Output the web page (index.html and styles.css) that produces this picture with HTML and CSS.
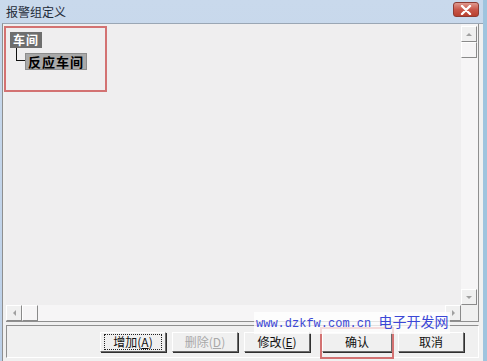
FILE: index.html
```html
<!DOCTYPE html>
<html lang="zh-CN">
<head>
    <meta charset="UTF-8">
    <title>报警组定义</title>
    <link rel="stylesheet" href="styles.css">
</head>
<body>
    <div class="window">
        <div class="titlebar">
            <span class="title">报警组定义</span>
            <span class="close-btn">
                <svg width="12" height="10" viewBox="0 0 12 10">
                    <path d="M2 1 L10 9 M10 1 L2 9" stroke="#fff" stroke-width="2.4" stroke-linecap="round"/>
                </svg>
            </span>
        </div>

        <div class="client">
            <div class="tree-box">
                <div class="tree-row">
                    <div class="tree-view">
                        <div class="node root">车间</div>
                        <div class="child">
                            <span class="branch"></span>
                            <div class="node leaf">反应车间</div>
                        </div>
                    </div>
                    <div class="vscroll">
                        <div class="sb-btn up"><span class="tri-up"></span></div>
                        <div class="sb-thumb-v"></div>
                        <div class="sb-track"></div>
                        <div class="sb-btn down"><span class="tri-down"></span></div>
                    </div>
                </div>
                <div class="hscroll">
                    <div class="sb-btn left"><span class="tri-left"></span></div>
                    <div class="sb-thumb-h"></div>
                    <div class="sb-track"></div>
                    <div class="sb-btn right"><span class="tri-right"></span></div>
                    <div class="sb-corner"></div>
                </div>
            </div>

            <div class="button-bar">
                <button class="btn focused"><span>增加(<u>A</u>)</span></button>
                <button class="btn" disabled>删除(<u>D</u>)</button>
                <button class="btn">修改(<u>E</u>)</button>
                <button class="btn ok">确认</button>
                <button class="btn">取消</button>
            </div>
        </div>

        <!-- 标注框 -->
        <div class="mark mark-tree"></div>
        <div class="mark mark-ok"></div>

        <div class="watermark">www.dzkfw.com.cn <span>电子开发网</span></div>
    </div>
</body>
</html>
```

FILE: styles.css
```css
* {
    margin: 0;
    padding: 0;
    box-sizing: border-box;
}

body {
    width: 487px;
    height: 361px;
    overflow: hidden;
    background-color: #b9d1ea;
    font-family: "Noto Sans CJK SC", "DejaVu Sans", sans-serif;
    font-size: 12px;
    color: #111;
}

.window {
    position: relative;
    width: 487px;
    height: 361px;
    display: flex;
    flex-direction: column;
    background: linear-gradient(to bottom, #c9d9ec 0%, #bcd0e8 100%);
    border-right: 4px solid #9fc4de;
}

.titlebar {
    height: 23px;
    display: flex;
    align-items: center;
    justify-content: space-between;
    padding: 0 4px 0 6px;
}

.title {
    font-size: 12px;
    color: #1e2a38;
    line-height: 1;
}

.close-btn {
    width: 26px;
    height: 15px;
    margin-top: -4px;
    border-radius: 3px;
    border: 1px solid #8d3b33;
    background: linear-gradient(to bottom, #e09a8f 0%, #c9574a 50%, #b8402f 100%);
    display: flex;
    align-items: center;
    justify-content: center;
}

.client {
    flex: 1;
    display: flex;
    flex-direction: column;
    margin-left: 2px;
    background-color: #f0f0f0;
    border-left: 1px solid #8f8f8f;
    border-top: 1px solid #9aa6b4;
    padding: 0 4px 3px 3px;
}

.tree-box {
    flex: 1;
    display: flex;
    flex-direction: column;
    border-right: 1px solid #8f8f8f;
}

.tree-row {
    flex: 1;
    display: flex;
}

.tree-view {
    flex: 1;
    background-color: #efeeef;
    padding: 7px 0 0 4px;
}

.node {
    display: inline-block;
    font-weight: bold;
    line-height: 16px;
    padding: 0 3px;
}

.root {
    background-color: #6e6e6e;
    color: #fff;
    font-size: 12px;
    letter-spacing: 1px;
}

.child {
    display: flex;
    align-items: flex-start;
    padding-left: 6px;
}

.branch {
    width: 9px;
    height: 13px;
    border-left: 1px solid #111;
    border-bottom: 1px solid #111;
}

.leaf {
    margin-top: 5px;
    background-color: #a9a9a9;
    border: 1px solid #8c8c8c;
    color: #000;
    font-size: 13px;
    line-height: 15px;
    padding: 0 2px;
    letter-spacing: 1px;
}

.vscroll {
    width: 17px;
    display: flex;
    flex-direction: column;
    background-color: #f6f5f6;
    padding-top: 2px;
}

.sb-track {
    flex: 1;
}

.sb-btn {
    width: 16px;
    height: 16px;
    background-color: #f0f0f0;
    border: 1px solid;
    border-color: #fff #8a8a8a #8a8a8a #fff;
    display: flex;
    align-items: center;
    justify-content: center;
}

.sb-thumb-v,
.sb-thumb-h {
    width: 16px;
    height: 16px;
    border: 1px solid;
    border-color: #fff #8a8a8a #8a8a8a #fff;
}

.tri-up, .tri-down, .tri-left, .tri-right {
    width: 0;
    height: 0;
    border: 3px solid transparent;
}

.tri-up { border-bottom-color: #a0a0a0; margin-top: -3px; }
.tri-down { border-top-color: #a0a0a0; margin-bottom: -3px; }
.tri-left { border-right-color: #a0a0a0; margin-left: -3px; }
.tri-right { border-left-color: #a0a0a0; margin-right: -3px; }

.hscroll {
    height: 17px;
    display: flex;
    background-color: #f6f5f6;
    border-bottom: 1px solid #8f8f8f;
}

.sb-corner {
    width: 17px;
    background-color: #f0f0f0;
}

.button-bar {
    height: 33px;
    margin-top: 3px;
    display: flex;
    align-items: center;
    justify-content: flex-end;
    gap: 6px;
    padding-right: 14px;
    border: 1px solid;
    border-color: #8f8f8f #fff #fff #8f8f8f;
    background-color: #f0f0f0;
}

.btn {
    height: 20px;
    width: 66px;
    font-family: "Noto Sans CJK SC", "DejaVu Sans", sans-serif;
    font-size: 12px;
    color: #111;
    white-space: nowrap;
    background-color: #f0f0f0;
    border: 1px solid;
    border-color: #fff #6a6a6a #6a6a6a #fff;
    box-shadow: 1px 1px 0 #303030;
    display: flex;
    align-items: center;
    justify-content: center;
}

.btn u {
    text-decoration: underline;
    text-underline-offset: 1px;
}

.btn.focused span {
    border: 1px dotted #222;
    padding: 0 8px;
    line-height: 14px;
}

.btn:disabled {
    color: #a8a8a8;
}

.btn.ok {
    width: 70px;
    margin-left: 6px;
}

.mark {
    position: absolute;
    border: 2px solid #d37272;
}

.mark-tree {
    left: 4px;
    top: 26px;
    width: 103px;
    height: 66px;
}

.mark-ok {
    left: 320px;
    top: 327px;
    width: 74px;
    height: 32px;
}

.watermark {
    position: absolute;
    left: 254px;
    top: 312px;
    font-family: "Liberation Mono", monospace;
    font-size: 12px;
    color: #3b47d6;
    background-color: rgba(255, 255, 255, 0.75);
    padding: 0 2px;
    line-height: 19px;
}

.watermark span {
    font-family: "Noto Sans CJK SC", sans-serif;
    font-size: 14px;
}
```
